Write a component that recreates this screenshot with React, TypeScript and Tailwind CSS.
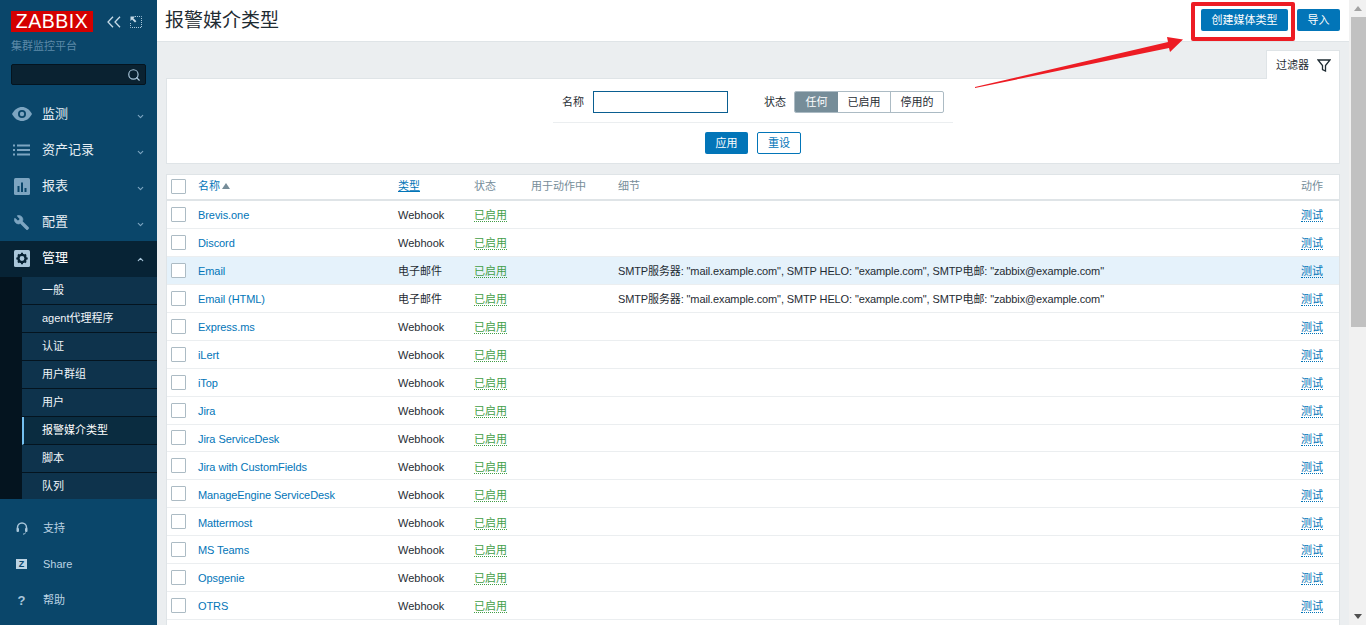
import { ChevronDown, ChevronUp, Search, Wrench } from "lucide-react";

const font = "font-['Liberation_Sans','Noto_Sans_CJK_SC',sans-serif]";

const subMenu = ["一般", "agent代理程序", "认证", "用户群组", "用户", "报警媒介类型", "脚本", "队列"];

const mediaTypes = [
  "Brevis.one",
  "Discord",
  "Email",
  "Email (HTML)",
  "Express.ms",
  "iLert",
  "iTop",
  "Jira",
  "Jira ServiceDesk",
  "Jira with CustomFields",
  "ManageEngine ServiceDesk",
  "Mattermost",
  "MS Teams",
  "Opsgenie",
  "OTRS",
];

const smtp = 'SMTP服务器: "mail.example.com", SMTP HELO: "example.com", SMTP电邮: "zabbix@example.com"';

function EyeIcon() {
  return (
    <svg width="20" height="14" viewBox="0 0 20 14">
      <path d="M0 7C3 2 6 0 10 0s7 2 10 7c-3 5-6 7-10 7S3 12 0 7z" fill="#7da5c1" />
      <circle cx="10" cy="7" r="4" fill="#0a466a" />
      <circle cx="10" cy="7" r="2.2" fill="#7da5c1" />
    </svg>
  );
}

function ListIcon() {
  return (
    <svg width="18" height="12" viewBox="0 0 18 12" fill="#7da5c1">
      <rect x="0" y="0.5" width="2" height="2" />
      <rect x="4" y="0.5" width="13" height="2" />
      <rect x="0" y="5" width="2" height="2" />
      <rect x="4" y="5" width="13" height="2" />
      <rect x="0" y="9.5" width="2" height="2" />
      <rect x="4" y="9.5" width="13" height="2" />
    </svg>
  );
}

function ChartIcon() {
  return (
    <svg width="16" height="17" viewBox="0 0 16 17">
      <rect width="16" height="17" rx="1.5" fill="#7da5c1" />
      <rect x="3.5" y="8" width="2" height="6" fill="#0a466a" />
      <rect x="7" y="4.5" width="2" height="9.5" fill="#0a466a" />
      <rect x="10.5" y="10" width="2" height="4" fill="#0a466a" />
    </svg>
  );
}

function CogIcon() {
  return (
    <svg width="16" height="17" viewBox="0 0 16 17">
      <rect width="16" height="17" rx="1.5" fill="#a9c6da" />
      <circle cx="8" cy="8.5" r="3.6" fill="none" stroke="#072335" strokeWidth="2.4" />
      <g stroke="#072335" strokeWidth="2">
        <path d="M8 2.8v2M8 12.2v2M2.3 8.5h2M11.7 8.5h2M4 4.5l1.4 1.4M10.6 11.1l1.4 1.4M12 4.5l-1.4 1.4M5.4 11.1L4 12.5" />
      </g>
    </svg>
  );
}

function HeadsetIcon() {
  return (
    <svg width="12" height="13" viewBox="0 0 12 13" fill="none">
      <path d="M1.5 7V5.5a4.5 4.5 0 0 1 9 0V7" stroke="#a9c6da" strokeWidth="1.5" />
      <rect x="0.5" y="6" width="2.5" height="4" rx="1" fill="#a9c6da" />
      <rect x="9" y="6" width="2.5" height="4" rx="1" fill="#a9c6da" />
      <path d="M9.5 10.5c0 1-1 1.6-2.5 1.6" stroke="#a9c6da" />
    </svg>
  );
}

function CollapseIcon() {
  return (
    <svg width="14" height="12" viewBox="0 0 14 12" fill="none">
      <path d="M6 .7L1 6l5 5.3M13 .7L8 6l5 5.3" stroke="#c7dbe8" strokeWidth="1.3" />
    </svg>
  );
}

function ExpandIcon() {
  return (
    <svg width="12" height="12" viewBox="0 0 12 12" fill="none">
      <path d="M5 .5h6.5V11.5H.5V6" stroke="#a9c6da" strokeDasharray="1 1" />
      <path d="M.5.5h4.5L3.4 2.2 6.4 5.2 5 6.6 2 3.6.5 5z" fill="#c7dbe8" />
    </svg>
  );
}

function MainNav({ label, icon, open }: { label: string; icon: React.ReactNode; open?: boolean }) {
  return (
    <div className={`flex h-9 items-center ${open ? "bg-[#072335] text-white" : "text-[#e6eef4]"}`}>
      <div className="flex w-[42px] shrink-0 justify-center pb-[2px] pl-[1px]">{icon}</div>
      <span className="flex-1 pb-[2px] text-[13px]">{label}</span>
      {open ? (
        <ChevronUp size={9} strokeWidth={3} className="mr-[12px] text-[#a9c6da]" />
      ) : (
        <ChevronDown size={9} strokeWidth={3} className="mt-[2px] mr-[12px] text-[#7da5c1]" />
      )}
    </div>
  );
}

function BottomNav({ label, icon }: { label: string; icon: React.ReactNode }) {
  return (
    <div className="flex h-9 items-center text-[#bcd3e3]">
      <div className="flex w-[43px] shrink-0 justify-center">{icon}</div>
      <span className="text-[11px]">{label}</span>
    </div>
  );
}

function Sidebar() {
  return (
    <aside className="flex h-full w-[157px] shrink-0 flex-col bg-[#0a466a]">
      <div className="flex items-center px-[11px] pt-[11px]">
        <div className="flex h-[21px] w-[82px] items-center justify-center bg-[#d40000] text-[19.5px] leading-none tracking-[0.5px] text-white">
          ZABBIX
        </div>
        <div className="ml-[14px] flex">
          <CollapseIcon />
        </div>
        <div className="ml-[9px] flex">
          <ExpandIcon />
        </div>
      </div>
      <div className="mt-[8px] pl-[11px] text-[11px] leading-[13px] text-[#5d8aa8]">集群监控平台</div>
      <div className="mx-[11px] mt-[11px] flex h-[21px] items-center justify-end rounded-[2px] border border-[#04141f] bg-[#0a2231] pr-[4px]">
        <Search size={14} strokeWidth={2} className="text-[#a9c6da]" />
      </div>
      <nav className="mt-[12px]">
        <MainNav label="监测" icon={<EyeIcon />} />
        <MainNav label="资产记录" icon={<ListIcon />} />
        <MainNav label="报表" icon={<ChartIcon />} />
        <MainNav label="配置" icon={<Wrench size={17} fill="#7da5c1" strokeWidth={1} className="-scale-x-100 text-[#7da5c1]" />} />
        <MainNav label="管理" icon={<CogIcon />} open />
      </nav>
      <div className="bg-[#04141f] pl-[22px]">
        {subMenu.map((item) => {
          const active = item === "报警媒介类型";
          return (
            <div
              key={item}
              className={`flex h-[28px] items-center border-b border-[#04141f] text-[11px] text-[#f0f5f9] last:h-[26px] last:border-b-0 ${
                active ? "border-l-2 border-l-[#74c0f0] bg-[#0a2c40] pl-[18px] text-white" : "bg-[#0e334c] pl-[20px]"
              }`}
            >
              {item}
            </div>
          );
        })}
      </div>
      <div className="mt-[11px]">
        <BottomNav label="支持" icon={<HeadsetIcon />} />
        <BottomNav
          label="Share"
          icon={
            <span className="flex h-[10px] w-[11px] items-center justify-center bg-[#bcd3e3] text-[9px] leading-none font-bold text-[#0a466a]">
              Z
            </span>
          }
        />
        <BottomNav label="帮助" icon={<span className="text-[13px] leading-none font-bold text-[#a9c6da]">?</span>} />
      </div>
    </aside>
  );
}

function FilterPanel() {
  return (
    <div className="border border-[#dfe4e7] bg-white">
      <div className="mx-auto w-[400px] border-b border-[#ebeef0] pt-[12px] pb-[9px]">
        <div className="flex h-[22px] items-center text-[11px] text-[#1f2c33]">
          <span className="ml-[9px] w-[31px]">名称</span>
          <div className="h-[22px] w-[135px] border border-[#0a5e91]" />
          <span className="ml-[36px] w-[30px]">状态</span>
          <div className="flex h-[22px] overflow-hidden rounded-[2px] border border-[#acbbc4]">
            <span className="flex w-[43px] items-center justify-center bg-[#768d99] text-white">任何</span>
            <span className="flex w-[53px] items-center justify-center border-r border-[#acbbc4]">已启用</span>
            <span className="flex w-[52px] items-center justify-center">停用的</span>
          </div>
        </div>
      </div>
      <div className="flex justify-center gap-[9px] pt-[9px] pb-[9px] text-[11px]">
        <button className="h-[22px] w-[43px] rounded-[2px] bg-[#0275b8] text-white">应用</button>
        <button className="h-[22px] w-[44px] rounded-[2px] border border-[#0275b8] bg-white text-[#0275b8]">重设</button>
      </div>
    </div>
  );
}

function Checkbox({ inRow }: { inRow?: boolean }) {
  return (
    <span
      className={`h-[15px] w-[15px] shrink-0 rounded-[1px] border border-[#acbbc4] bg-white ${inRow ? "-mt-[2px]" : ""}`}
    />
  );
}

function MediaTable() {
  return (
    <div className="mt-[10px] border-x border-t border-[#dfe4e7] bg-white pb-[10px] text-[11px]">
      <div className="flex h-[26px] items-center border-b-2 border-[#dfe4e7] pb-[2px] pl-[4px] text-[#768d99]">
        <Checkbox />
        <span className="ml-[12px] flex w-[200px] items-center text-[#0275b8]">
          名称
          <svg width="8" height="6" viewBox="0 0 8 6" className="ml-[2px]">
            <path d="M4 0l4 6H0z" fill="#768d99" />
          </svg>
        </span>
        <span className="w-[76px] text-[#0275b8] underline">类型</span>
        <span className="w-[57px]">状态</span>
        <span className="w-[87px]">用于动作中</span>
        <span className="flex-1">细节</span>
        <span className="w-[38px]">动作</span>
      </div>
      {mediaTypes.map((name) => {
        const isEmail = name.startsWith("Email");
        return (
          <div
            key={name}
            className={`flex h-[27.95px] items-center border-b border-[#ebeef0] pt-[2px] pl-[4px] text-[#1f2c33] ${
              name === "Email" ? "bg-[#e5f2fb]" : ""
            }`}
          >
            <Checkbox inRow />
            <span className="ml-[12px] w-[200px] tracking-[-0.08px] text-[#0275b8]">{name}</span>
            <span className="w-[76px]">{isEmail ? "电子邮件" : "Webhook"}</span>
            <span className="w-[57px]">
              <span className="border-b border-dotted border-[#429e47] text-[#429e47]">已启用</span>
            </span>
            <span className="w-[87px]" />
            <span className="flex-1 tracking-[-0.12px]">{isEmail ? smtp : ""}</span>
            <span className="w-[38px]">
              <span className="border-b border-dotted border-[#0275b8] text-[#0275b8]">测试</span>
            </span>
          </div>
        );
      })}
    </div>
  );
}

function Scrollbar() {
  return (
    <div className="flex h-full w-[17px] shrink-0 flex-col items-center bg-[#f1f1f1]">
      <div className="flex h-[17px] items-center justify-center">
        <svg width="8" height="5" viewBox="0 0 8 5">
          <path d="M4 0l4 5H0z" fill="#a3a3a3" />
        </svg>
      </div>
      <div className="h-[310px] w-[15px] self-end bg-[#c1c1c1]" />
      <div className="flex-1" />
      <div className="flex h-[17px] items-center justify-center">
        <svg width="8" height="5" viewBox="0 0 8 5">
          <path d="M0 0h8L4 5z" fill="#505050" />
        </svg>
      </div>
    </div>
  );
}

export default function App() {
  return (
    <div className={`relative flex h-[625px] w-[1366px] overflow-hidden bg-[#ebeef0] ${font}`}>
      <Sidebar />
      <main className="h-full min-w-0 flex-1 overflow-hidden">
        <header className="flex h-[42px] items-start justify-between border-b border-[#dfe4e7] bg-white pt-[9px] pr-[9px] pl-[9px]">
          <h1 className="-ml-[1px] text-[19px] leading-[24px] font-normal text-[#1f2c33]">报警媒介类型</h1>
          <div className="flex gap-[9px] text-[11px] text-white">
            <button className="h-[22px] w-[87px] rounded-[2px] bg-[#0275b8]">创建媒体类型</button>
            <button className="h-[22px] w-[43px] rounded-[2px] bg-[#0275b8]">导入</button>
          </div>
        </header>
        <div className="pr-[9px] pl-[9px]">
          <div className="mt-[8px] flex justify-end">
            <div className="-mb-[1px] flex h-[29px] w-[74px] items-center justify-between border-x border-t border-[#dfe4e7] bg-white pr-[8px] pl-[9px] text-[11px] text-[#1f2c33]">
              过滤器
              <svg width="14" height="13" viewBox="0 0 14 13" fill="none">
                <path d="M1 1h12L8.5 6.5V12l-3-1.5v-4z" stroke="#1f2c33" strokeWidth="1.3" />
              </svg>
            </div>
          </div>
          <FilterPanel />
          <MediaTable />
        </div>
      </main>
      <Scrollbar />

      {/* annotation drawn over the screenshot */}
      <div className="absolute top-[2px] left-[1191px] h-[39px] w-[104px] rounded-[2px] border-[4px] border-[#ed1c24]" />
      <svg width="1366" height="625" className="pointer-events-none absolute top-0 left-0">
        <path d="M975 87L1168 42L1167 37L1183 39.5L1170 52L1169 48L975 88z" fill="#ed1c24" />
      </svg>
    </div>
  );
}
